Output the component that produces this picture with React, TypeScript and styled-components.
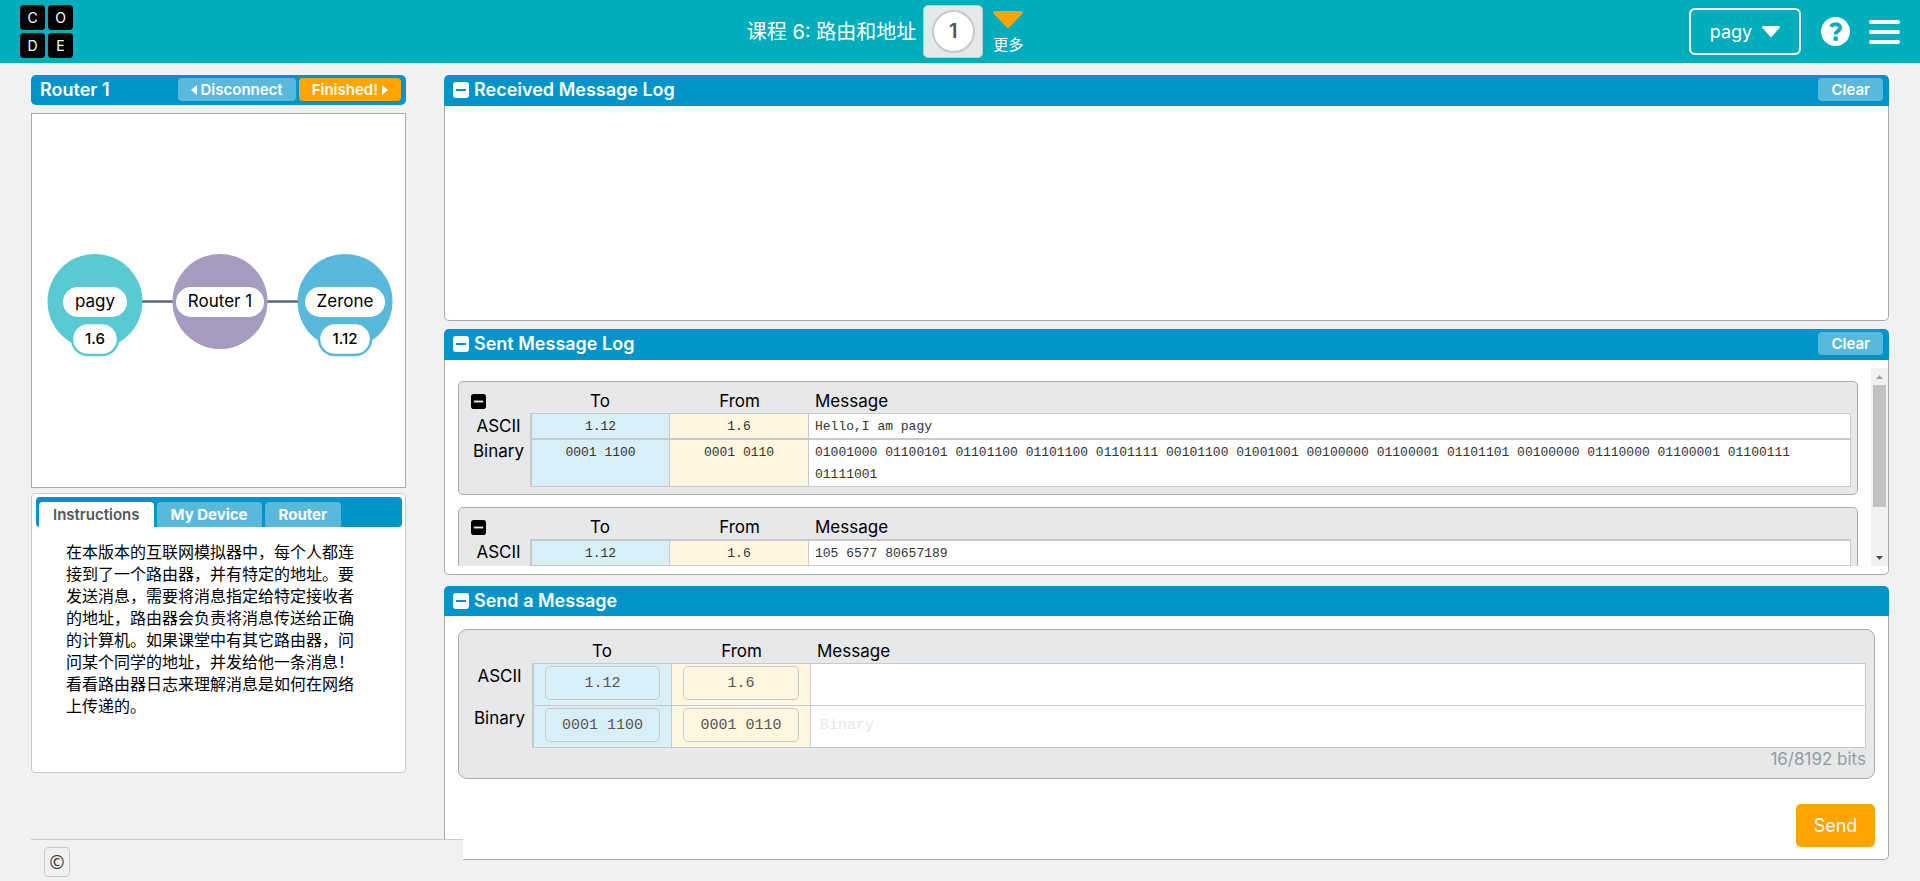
import React, { useState } from 'react';
import styled, { createGlobalStyle } from 'styled-components';

const sans = '"Inter", "Noto Sans CJK SC", sans-serif';
const mono = '"Liberation Mono", monospace';

const GlobalStyle = createGlobalStyle`
  *, *::before, *::after { box-sizing: border-box; }
  body { margin: 0; background: #f1f1f1; color: #000; font-family: ${sans}; }
  button, input, textarea { font-family: inherit; margin: 0; }
  svg { display: block; }
`;

/* ---------- page header ---------- */

const TopBar = styled.header`
  display: flex;
  align-items: center;
  height: 63px;
  padding: 0 20px;
  background: #00adbc;
  color: #fff;
`;

const Logo = styled.a`
  display: grid;
  grid-template-columns: 25px 25px;
  gap: 3px;
  color: #fff;
  text-decoration: none;
`;

const LogoTile = styled.span`
  height: 25px;
  border-radius: 4px;
  background: #000;
  font-size: 14px;
  line-height: 25px;
  text-align: center;
`;

const LessonNav = styled.nav`
  flex: 1;
  display: flex;
  align-items: center;
  justify-content: center;
  padding-left: 8px;
`;

const LessonLink = styled.a`
  margin-right: 7px;
  color: #fff;
  font-size: 20px;
  line-height: 24px;
  text-decoration: none;
`;

const StageBox = styled.a`
  display: flex;
  align-items: center;
  justify-content: center;
  width: 60px;
  height: 53px;
  margin-right: 10px;
  border: 1px solid #c6cacd;
  border-radius: 5px;
  background: #e7e8ea;
  text-decoration: none;
`;

const StageBubble = styled.span`
  width: 43px;
  height: 43px;
  border: 2px solid #c6cacd;
  border-radius: 50%;
  background: #fff;
  color: #4d575f;
  font-size: 20px;
  font-weight: 600;
  line-height: 39px;
  text-align: center;
`;

const MoreButton = styled.button`
  display: flex;
  flex-direction: column;
  gap: 6px;
  align-items: center;
  padding: 3px 0 0;
  border: 0;
  background: none;
  color: #fff;
  font-size: 15px;
  line-height: 22px;
  cursor: pointer;
`;

const HeaderTools = styled.div`
  display: flex;
  align-items: center;
`;

const UserButton = styled.button`
  display: flex;
  align-items: center;
  justify-content: center;
  gap: 10px;
  width: 112px;
  height: 47px;
  margin-right: 20px;
  padding: 0;
  border: 2px solid #fff;
  border-radius: 6px;
  background: none;
  color: #fff;
  font-size: 18px;
  line-height: 22px;
  cursor: pointer;
`;

const IconButton = styled.button<{ $gap?: number }>`
  display: block;
  margin-right: ${(p) => p.$gap ?? 0}px;
  padding: 0;
  border: 0;
  background: none;
  cursor: pointer;
`;

/* ---------- columns ---------- */

const Main = styled.main`
  display: flex;
  align-items: flex-start;
  gap: 38px;
  padding: 12px 31px 0;
`;

const Sidebar = styled.aside`
  flex: 0 0 375px;
`;

const Content = styled.div`
  flex: 1;
  min-width: 0;
`;

const BarButton = styled.button<{ $accent?: boolean }>`
  display: flex;
  align-items: center;
  gap: 4px;
  height: 23px;
  padding: 0 13px;
  border: 0;
  border-radius: 4px;
  background: ${(p) => (p.$accent ? '#ffa400' : '#59b9dc')};
  color: #fff;
  font-size: 15px;
  font-weight: 600;
  line-height: 22px;
  cursor: pointer;
`;

const TitleBar = styled.div<{ $round?: boolean; $tall?: boolean }>`
  display: flex;
  align-items: flex-start;
  gap: 3px;
  height: ${(p) => (p.$tall ? 31 : 30)}px;
  padding: 3px ${(p) => (p.$tall ? 6 : 5)}px 0 9px;
  border-radius: ${(p) => (p.$round ? '5px' : '5px 5px 0 0')};
  background: #0094ca;
`;

const BarTitle = styled.h2`
  flex: 1;
  display: flex;
  align-items: center;
  gap: 5px;
  margin: 0;
  color: #fff;
  font-size: 18px;
  font-weight: 600;
  line-height: 24px;
`;

/* ---------- network map ---------- */

const MapBox = styled.div`
  margin: 8px 0 5px;
  border: 1px solid #a9abad;
  background: #fff;
`;

const MapSvg = styled.svg`
  width: 100%;
  height: auto;
`;

const NodeText = styled.text<{ $small?: boolean }>`
  font-family: ${sans};
  font-size: ${(p) => (p.$small ? 15 : 17)}px;
  font-weight: ${(p) => (p.$small ? 500 : 400)};
  text-anchor: middle;
`;

/* ---------- tabs ---------- */

const TabBox = styled.section`
  min-height: 280px;
  padding: 3px 3px 3px 4px;
  border: 1px solid #c6cacd;
  border-radius: 4px;
  background: #fff;
`;

const TabList = styled.div`
  display: flex;
  align-items: flex-end;
  gap: 3px;
  height: 30px;
  padding-left: 3px;
  border-radius: 4px;
  background: #0094ca;
`;

const Tab = styled.button<{ $active: boolean }>`
  height: 25px;
  padding: 0 14px;
  border: 0;
  border-radius: 4px 4px 0 0;
  background: ${(p) => (p.$active ? '#fff' : '#59b9dc')};
  color: ${(p) => (p.$active ? '#4d575f' : '#fff')};
  font-size: 15px;
  font-weight: ${(p) => (p.$active ? 600 : 700)};
  line-height: 22px;
  cursor: pointer;
`;

const Instructions = styled.p`
  margin: 0;
  padding: 14px 35px 14px 30px;
  font-size: 16px;
  line-height: 22px;
`;

/* ---------- panels ---------- */

const Panel = styled.section<{ $gap?: number }>`
  margin-bottom: ${(p) => p.$gap ?? 0}px;
`;

const PanelBody = styled.div<{ $height?: number; $pad?: string }>`
  min-height: ${(p) => (p.$height ? `${p.$height}px` : 'auto')};
  padding: ${(p) => p.$pad ?? '0'};
  border: 1px solid #a9abad;
  border-top: 0;
  border-radius: 0 0 5px 5px;
  background: #fff;
`;

const LogFrame = styled.div`
  display: flex;
  height: 198px;
`;

const LogScroll = styled.div`
  flex: 1;
  min-width: 0;
  padding: 13px 13px 0;
  overflow-y: auto;
  scrollbar-width: none;
`;

const ScrollBar = styled.div`
  display: flex;
  flex-direction: column;
  width: 17px;
  background: #f1f1f1;
`;

const ScrollArrow = styled.span`
  display: flex;
  align-items: center;
  justify-content: center;
  height: 17px;
`;

const ScrollThumb = styled.span`
  height: 122px;
  margin: 0 2px 42px;
  background: #c1c1c1;
`;

const Card = styled.div<{ $editor?: boolean }>`
  margin-bottom: ${(p) => (p.$editor ? 25 : 12)}px;
  padding: ${(p) => (p.$editor ? '0 8px 8px 0' : '0 6px 7px 0')};
  border: 1px solid #a9abad;
  border-radius: ${(p) => (p.$editor ? 9 : 5)}px;
  background: #e7e8ea;
`;

const Packet = styled.table`
  width: 100%;
  border-spacing: 0;
  table-layout: fixed;
`;

const Col = styled.col<{ $width?: number }>`
  width: ${(p) => (p.$width ? `${p.$width}px` : 'auto')};
`;

const HeadCell = styled.th<{ $tall?: boolean; $left?: boolean }>`
  height: ${(p) => (p.$tall ? 33 : 31)}px;
  padding: ${(p) => (p.$tall ? 10 : 8)}px 0 0 ${(p) => (p.$left ? 6 : 0)}px;
  font-size: 17px;
  font-weight: 400;
  line-height: 22px;
  text-align: ${(p) => (p.$left ? 'left' : 'center')};
  vertical-align: top;
`;

const CornerCell = styled.td`
  padding: 12px 0 0 12px;
  vertical-align: top;
`;

const RowLabel = styled.th`
  padding: 2px 0 0 8px;
  font-size: 17px;
  font-weight: 400;
  line-height: 22px;
  text-align: center;
  vertical-align: top;
`;

type Kind = 'to' | 'from' | 'message';
const fill: Record<Kind, string> = { to: '#d9eff7', from: '#fff6e0', message: '#fff' };

const DataCell = styled.td<{ $kind: Kind; $last?: boolean; $thick?: boolean }>`
  padding: 2px 6px 0;
  border: 0 solid #c6cacd;
  border-top-width: ${(p) => (p.$thick ? 2 : 1)}px;
  border-right-width: 1px;
  border-bottom-width: ${(p) => (p.$last ? 1 : 0)}px;
  border-left-width: ${(p) => (p.$kind === 'to' ? 2 : 0)}px;
  background: ${(p) => fill[p.$kind]};
  color: #333;
  font-family: ${mono};
  font-size: 13px;
  line-height: 22px;
  text-align: ${(p) => (p.$kind === 'message' ? 'left' : 'center')};
  vertical-align: top;
`;

const EditCell = styled(DataCell)`
  height: ${(p) => (p.$last ? 43 : 42)}px;
  padding: ${(p) => (p.$kind === 'message' ? '0' : '2px 11px 5px')};
`;

const AddressInput = styled.input`
  display: block;
  width: 100%;
  height: 34px;
  padding: 0;
  border: 1px solid #c6cacd;
  border-radius: 5px;
  background: none;
  color: #555;
  font-family: ${mono};
  font-size: 15px;
  text-align: center;
`;

const MessageInput = styled.textarea`
  display: block;
  width: 100%;
  height: 41px;
  padding: 9px;
  border: 0;
  outline: 0;
  resize: none;
  background: none;
  color: #555;
  font-family: ${mono};
  font-size: 15px;
  line-height: 22px;
  &::placeholder { color: #e7e8ea; }
`;

const BitCount = styled.div`
  color: #949ca2;
  font-size: 17px;
  line-height: 22px;
  text-align: right;
`;

const SendRow = styled.div`
  display: flex;
  justify-content: flex-end;
`;

const SendButton = styled.button`
  width: 79px;
  height: 43px;
  padding: 0;
  border: 0;
  border-radius: 5px;
  background: #ffa400;
  color: #fff;
  font-size: 18px;
  line-height: 22px;
  cursor: pointer;
`;

/* ---------- footer ---------- */

const Footer = styled.footer`
  position: fixed;
  left: 31px;
  bottom: 0;
  width: 432px;
  height: 42px;
  padding: 7px 13px;
  border-top: 1px solid #c6cacd;
  background: #f1f1f1;
`;

const CopyrightButton = styled.button`
  display: flex;
  align-items: center;
  justify-content: center;
  width: 26px;
  height: 30px;
  padding: 0;
  border: 1px solid #c6cacd;
  border-radius: 4px;
  background: none;
  color: #333;
  font-family: "Open Sans", sans-serif;
  font-size: 18px;
  cursor: pointer;
`;

const Minus = ({ size, color, line }: { size: number; color: string; line: string }) => (
  <svg width={size} height={size} viewBox="0 0 16 16" aria-hidden="true">
    <rect width="16" height="16" rx="3" fill={color} />
    <rect x="3" y="7" width="10" height="2" fill={line} />
  </svg>
);

const Caret = ({ left }: { left?: boolean }) => (
  <svg width="6" height="10" viewBox="0 0 6 10" aria-hidden="true">
    <path d={left ? 'M6 0V10L0 5Z' : 'M0 0V10L6 5Z'} fill="#fff" />
  </svg>
);

const DownTriangle = ({ width, height, color }: { width: number; height: number; color: string }) => (
  <svg width={width} height={height} viewBox="0 0 30 17" preserveAspectRatio="none" aria-hidden="true">
    <path d="M1.5 1.5H28.5L15 15.5Z" fill={color} stroke={color} strokeWidth="3" strokeLinejoin="round" />
  </svg>
);

const nodes = [
  { name: 'pagy', address: '1.6', x: 63, pill: 64, tag: 44, color: '#59cad3' },
  { name: 'Router 1', x: 188, pill: 88, tag: 0, color: '#a69bc1' },
  { name: 'Zerone', address: '1.12', x: 313, pill: 80, tag: 50, color: '#59b9dc' },
];

const NetworkMap = () => (
  <MapSvg viewBox="0 0 373 373" role="img" aria-label="Network map">
    <path d="M63 187.5H313" stroke="#5b6770" strokeWidth="2.6" />
    {nodes.map((n) => (
      <g key={n.name}>
        <circle cx={n.x} cy="187.5" r="47.5" fill={n.color} />
        <rect x={n.x - n.pill / 2} y="173" width={n.pill} height="30" rx="15" fill="#fff" />
        <NodeText x={n.x} y="193">{n.name}</NodeText>
        {n.address && (
          <>
            <rect x={n.x - n.tag / 2 - 1} y="209" width={n.tag + 2} height="32" rx="16" fill="#fff" stroke={n.color} strokeWidth="2.5" />
            <NodeText $small x={n.x} y="230">{n.address}</NodeText>
          </>
        )}
      </g>
    ))}
  </MapSvg>
);

const toBinary = (text: string) =>
  [...text].map((c) => c.charCodeAt(0).toString(2).padStart(8, '0')).join(' ');

const LogEntry = ({ message, binary }: { message: string; binary?: boolean }) => (
  <Card>
    <Packet>
      <colgroup>
        <Col $width={71} />
        <Col $width={140} />
        <Col $width={139} />
        <Col />
      </colgroup>
      <thead>
        <tr>
          <CornerCell>
            <IconButton aria-label="Collapse message">
              <Minus size={15} color="#000" line="#e7e8ea" />
            </IconButton>
          </CornerCell>
          <HeadCell scope="col">To</HeadCell>
          <HeadCell scope="col">From</HeadCell>
          <HeadCell scope="col" $left>Message</HeadCell>
        </tr>
      </thead>
      <tbody>
        <tr>
          <RowLabel scope="row">ASCII</RowLabel>
          <DataCell $kind="to" $thick={!binary} $last={!binary}>1.12</DataCell>
          <DataCell $kind="from" $thick={!binary} $last={!binary}>1.6</DataCell>
          <DataCell $kind="message" $thick={!binary} $last={!binary}>{message}</DataCell>
        </tr>
        {binary && (
          <tr>
            <RowLabel scope="row">Binary</RowLabel>
            <DataCell $kind="to" $thick $last>0001 1100</DataCell>
            <DataCell $kind="from" $thick $last>0001 0110</DataCell>
            <DataCell $kind="message" $thick $last>{toBinary(message)}</DataCell>
          </tr>
        )}
      </tbody>
    </Packet>
  </Card>
);

const PanelHeader = ({ title, tall, clear }: { title: string; tall?: boolean; clear?: boolean }) => (
  <TitleBar $tall={tall}>
    <BarTitle>
      <IconButton aria-label={`Collapse ${title}`}>
        <Minus size={16} color="#fff" line="#0094ca" />
      </IconButton>
      {title}
    </BarTitle>
    {clear && <BarButton>Clear</BarButton>}
  </TitleBar>
);

const tabs = ['Instructions', 'My Device', 'Router'];

export default function App() {
  const [tab, setTab] = useState(tabs[0]);
  return (
    <>
      <GlobalStyle />
      <TopBar>
        <Logo href="#" aria-label="Home">
          {['C', 'O', 'D', 'E'].map((letter) => <LogoTile key={letter}>{letter}</LogoTile>)}
        </Logo>
        <LessonNav>
          <LessonLink href="#">课程 6: 路由和地址</LessonLink>
          <StageBox href="#"><StageBubble>1</StageBubble></StageBox>
          <MoreButton>
            <DownTriangle width={30} height={17} color="#ffa400" />
            更多
          </MoreButton>
        </LessonNav>
        <HeaderTools>
          <UserButton>
            pagy
            <DownTriangle width={18} height={11} color="#fff" />
          </UserButton>
          <IconButton $gap={19} aria-label="Help">
            <svg width="29" height="29" viewBox="0 0 29 29" aria-hidden="true">
              <circle cx="14.5" cy="14.5" r="14.5" fill="#fff" />
              <path d="M9.9 9.6Q11.8 7.1 14.7 7.1C17.3 7.1 19.2 8.6 19.2 10.7C19.2 14 14.7 13.7 14.7 17.4" fill="none" stroke="#00adbc" strokeWidth="3.8" />
              <rect x="12.6" y="19.6" width="4.2" height="4.2" rx="0.5" fill="#00adbc" />
            </svg>
          </IconButton>
          <IconButton aria-label="Menu">
            <svg width="31" height="24" viewBox="0 0 31 24" aria-hidden="true">
              <path d="M2 2H29M2 12H29M2 22H29" stroke="#fff" strokeWidth="4" strokeLinecap="round" />
            </svg>
          </IconButton>
        </HeaderTools>
      </TopBar>

      <Main>
        <Sidebar>
          <TitleBar $round>
            <BarTitle>Router 1</BarTitle>
            <BarButton><Caret left />Disconnect</BarButton>
            <BarButton $accent>Finished!<Caret /></BarButton>
          </TitleBar>
          <MapBox><NetworkMap /></MapBox>
          <TabBox>
            <TabList role="tablist">
              {tabs.map((name) => (
                <Tab key={name} role="tab" aria-selected={tab === name} $active={tab === name} onClick={() => setTab(name)}>
                  {name}
                </Tab>
              ))}
            </TabList>
            {tab === tabs[0] && (
              <Instructions>
                在本版本的互联网模拟器中，每个人都连接到了一个路由器，并有特定的地址。要发送消息，需要将消息指定给特定接收者的地址，路由器会负责将消息传送给正确的计算机。如果课堂中有其它路由器，问问某个同学的地址，并发给他一条消息！看看路由器日志来理解消息是如何在网络上传递的。
              </Instructions>
            )}
          </TabBox>
        </Sidebar>

        <Content>
          <Panel $gap={8}>
            <PanelHeader title="Received Message Log" tall clear />
            <PanelBody $height={215} />
          </Panel>

          <Panel $gap={11}>
            <PanelHeader title="Sent Message Log" tall clear />
            <PanelBody $pad="8px 0">
              <LogFrame>
                <LogScroll>
                  <LogEntry message="Hello,I am pagy" binary />
                  <LogEntry message="105 6577 80657189" />
                </LogScroll>
                <ScrollBar aria-hidden="true">
                  <ScrollArrow>
                    <svg width="7" height="4" viewBox="0 0 7 4"><path d="M0 4L3.5 0L7 4Z" fill="#a3a3a3" /></svg>
                  </ScrollArrow>
                  <ScrollThumb />
                  <ScrollArrow>
                    <svg width="7" height="4" viewBox="0 0 7 4"><path d="M0 0L3.5 4L7 0Z" fill="#505050" /></svg>
                  </ScrollArrow>
                </ScrollBar>
              </LogFrame>
            </PanelBody>
          </Panel>

          <Panel>
            <PanelHeader title="Send a Message" />
            <PanelBody $pad="13px 13px 12px">
              <Card $editor>
                <Packet>
                  <colgroup>
                    <Col $width={73} />
                    <Col $width={140} />
                    <Col $width={139} />
                    <Col />
                  </colgroup>
                  <thead>
                    <tr>
                      <td />
                      <HeadCell scope="col" $tall>To</HeadCell>
                      <HeadCell scope="col" $tall>From</HeadCell>
                      <HeadCell scope="col" $tall $left>Message</HeadCell>
                    </tr>
                  </thead>
                  <tbody>
                    <tr>
                      <RowLabel scope="row">ASCII</RowLabel>
                      <EditCell $kind="to"><AddressInput aria-label="To, ASCII" defaultValue="1.12" /></EditCell>
                      <EditCell $kind="from"><AddressInput aria-label="From, ASCII" defaultValue="1.6" readOnly /></EditCell>
                      <EditCell $kind="message"><MessageInput aria-label="Message, ASCII" /></EditCell>
                    </tr>
                    <tr>
                      <RowLabel scope="row">Binary</RowLabel>
                      <EditCell $kind="to" $last><AddressInput aria-label="To, binary" defaultValue="0001 1100" /></EditCell>
                      <EditCell $kind="from" $last><AddressInput aria-label="From, binary" defaultValue="0001 0110" readOnly /></EditCell>
                      <EditCell $kind="message" $last><MessageInput aria-label="Message, binary" placeholder="Binary" /></EditCell>
                    </tr>
                  </tbody>
                </Packet>
                <BitCount>16/8192 bits</BitCount>
              </Card>
              <SendRow><SendButton>Send</SendButton></SendRow>
            </PanelBody>
          </Panel>
        </Content>
      </Main>

      <Footer>
        <CopyrightButton aria-label="Copyright">©</CopyrightButton>
      </Footer>
    </>
  );
}
